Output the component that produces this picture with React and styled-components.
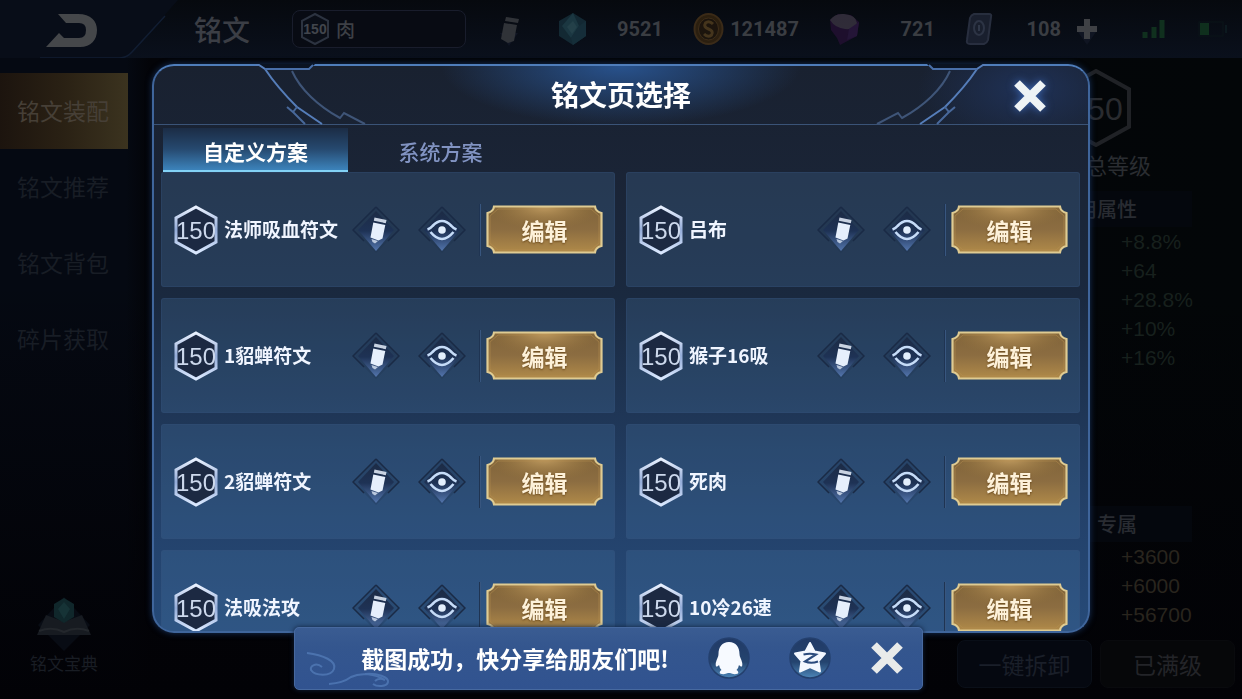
import React from "react";
import styled, { createGlobalStyle } from "styled-components";

const GlobalStyle = createGlobalStyle`
    * {
        box-sizing: border-box;
    }

    body {
        margin: 0;
        background: #030509;
        font-family: "Noto Sans CJK SC", "Noto Sans", sans-serif;
        overflow: hidden;
    }

    button {
        margin: 0;
        padding: 0;
        border: 0;
        background: none;
        font-family: inherit;
        cursor: pointer;
    }

    h1, h2, h3, ul {
        margin: 0;
        padding: 0;
        list-style: none;
    }

    svg {
        display: block;
        flex: none;
    }
`

/* ---------- page behind the dialog ---------- */

const Page = styled.div`
    display: flex;
    flex-direction: column;
    height: 100vh;
    background:
        linear-gradient(transparent 40%, #020206),
        linear-gradient(90deg, #050912 0, #050912 126px, #030408 150px, #030608 100%);
`

const TopBar = styled.header`
    display: flex;
    align-items: center;
    height: 58px;
    padding-right: 14px;
    background: linear-gradient(#06090e, #0a101c);
    color: #3a3d42;
`

const BackButton = styled.button`
    width: 194px;
    height: 58px;
`

const PageTitle = styled.h1`
    width: 98px;
    font-size: 28px;
    line-height: 40px;
    font-weight: 500;
    color: #3b3e45;
`

const PageSelect = styled.button`
    display: flex;
    align-items: center;
    gap: 6px;
    width: 174px;
    height: 38px;
    padding-left: 7px;
    border: 1px solid #191d2c;
    border-radius: 8px;
    background: #080b13;
    color: #3d4046;
    font-size: 19px;
    line-height: 28px;
    font-weight: 500;
`

const RenameButton = styled.button`
    margin: 0 auto 0 30px;
`

const Resources = styled.ul`
    display: flex;
    gap: 30px;
`

const Resource = styled.li`
    display: flex;
    align-items: center;
    justify-content: space-between;
    width: ${({ $narrow }) => ($narrow ? "96px" : "106px")};
    font-family: Roboto, "Liberation Sans", sans-serif;
    font-weight: 700;
    font-size: 20px;
    line-height: 30px;

    svg {
        opacity: 0.8;
    }
`

const AddButton = styled.button`
    margin: 0 44px 0 15px;
`

const DeviceStatus = styled.div`
    display: flex;
    align-items: center;
    gap: 32px;
`

const Body = styled.div`
    display: flex;
    flex: 1;
    justify-content: space-between;
    min-height: 0;
`

const Sidebar = styled.nav`
    display: flex;
    flex-direction: column;
    width: 128px;
    padding-top: 15px;
`

const SideItem = styled.a`
    height: 76px;
    padding-left: 17px;
    font-size: 23px;
    line-height: 74px;
    text-decoration: none;
    color: ${({ $active }) => ($active ? "#463f36" : "#181d25")};
    background: ${({ $active }) =>
        $active ? "linear-gradient(90deg, #1c140e, #2a2114 50%, #3b331f)" : "none"};
`

const Guide = styled.button`
    display: flex;
    flex-direction: column;
    align-items: center;
    margin-top: auto;
    padding-bottom: 24px;
    color: #191d24;
    font-size: 17px;
    line-height: 24px;
`

const Summary = styled.aside`
    display: flex;
    flex-direction: column;
    align-items: center;
    width: 285px;
    padding: 11px 7px 11px 0;
    color: #25282c;
`

const TotalLabel = styled.p`
    margin: 1px 0 11px;
    font-size: 22px;
    line-height: 32px;
    color: #2a2d31;
`

const AttrTitle = styled.h3`
    width: 192px;
    height: 36px;
    padding-right: 55px;
    background: #04070d;
    color: #292c32;
    font-size: 20px;
    line-height: 36px;
    font-weight: 500;
    text-align: right;
`

const AttrList = styled.ul`
    width: 192px;
    padding-left: 121px;
    font-family: "Liberation Sans", sans-serif;
    font-size: 21px;
    line-height: 29px;
    color: ${({ $gold }) => ($gold ? "#29251e" : "#17201d")};
`

const Exclusive = styled.section`
    margin-top: auto;
`

const SummaryActions = styled.div`
    display: flex;
    gap: 8px;
    width: 100%;
    margin-top: 11px;
`

const SummaryButton = styled.button`
    flex: 1;
    height: 48px;
    border: 1px solid ${({ $done }) => ($done ? "#090a0d" : "#0a0f18")};
    border-radius: 8px;
    background: ${({ $done }) => ($done ? "#060709" : "#050810")};
    color: ${({ $done }) => ($done ? "#232428" : "#1a1f29")};
    font-size: 23px;
    line-height: 32px;
`

/* ---------- dialog ---------- */

const DialogLayer = styled.div`
    position: fixed;
    inset: 0;
    display: flex;
    padding: 64px 152px 66px;
`

const Dialog = styled.section`
    position: relative;
    display: flex;
    flex-direction: column;
    flex: 1;
    min-width: 0;
    border: 2px solid #3f659b;
    border-top-color: #4f7dba;
    border-radius: 22px;
    background: linear-gradient(#192130 0, #1a2436 110px, #1a293f 230px, #23416a 450px, #264a78 100%);
    box-shadow: 0 0 6px #16305a;
`

const DialogHeader = styled.div`
    display: flex;
    align-items: center;
    justify-content: center;
    flex: none;
    height: 59px;
    padding-bottom: 2px;
    border-bottom: 1px solid #3a5377;
    border-radius: 20px 20px 0 0;
    background:
        radial-gradient(ellipse 180px 60px at 50% 0, #28528d, transparent),
        radial-gradient(ellipse 110px 60px at calc(100% - 60px) 40%, #1f3156, transparent);
`

const HeaderFrame = styled.svg`
    position: absolute;
    top: -2px;
    ${({ $right }) => ($right ? "right: -2px; transform: scaleX(-1);" : "left: -2px;")}
`

const DialogTitle = styled.h2`
    color: #fff;
    font-size: 28px;
    line-height: 40px;
    font-weight: 700;
`

const DialogClose = styled.button`
    position: absolute;
    top: 13px;
    right: 41px;
    filter: drop-shadow(0 0 4px #3d68b5);
`

const Tabs = styled.div`
    display: flex;
    flex: none;
    height: 47px;
    padding: 3px 9px 0;
`

const Tab = styled.button`
    width: 185px;
    padding-top: 3px;
    border-bottom: 2px solid ${({ $active }) => ($active ? "#83d2f6" : "transparent")};
    background: ${({ $active }) =>
        $active ? "linear-gradient(#1b2c45, #26496f 50%, #3c83bb)" : "none"};
    color: ${({ $active }) => ($active ? "#fff" : "#8193c2")};
    font-size: 21px;
    line-height: 30px;
    font-weight: ${({ $active }) => ($active ? 700 : 500)};
`

const CardGrid = styled.ul`
    display: grid;
    grid-template-columns: 1fr 1fr;
    grid-auto-rows: 115px;
    gap: 11px;
    flex: 1;
    min-height: 0;
    padding: 0 8px 0 7px;
    overflow: hidden;
    border-radius: 0 0 20px 20px;
`

const Card = styled.li`
    display: flex;
    align-items: center;
    min-width: 0;
    padding: 0 11px 0 12px;
    border: 1px solid #36527a55;
    border-radius: 3px;
    background: #4a76a842;
`

const CardName = styled.span`
    flex: 1;
    min-width: 0;
    padding: 0 0 2px 6px;
    color: #f0f5ff;
    font-size: 19px;
    line-height: 28px;
    font-weight: 700;
    white-space: nowrap;
`

const CardTools = styled.div`
    display: flex;
    gap: 18px;
    padding-right: 13px;
`

const EditButton = styled.button`
    position: relative;
    width: 117px;
    height: 49px;
    color: #fdf1d9;
    font-size: 23px;
    line-height: 48px;
    font-weight: 700;
    text-shadow: 0 1px 2px #6b4a1c;

    svg {
        position: absolute;
        inset: 0;
    }

    span {
        position: relative;
    }
`

const Divider = styled.span`
    width: 2px;
    height: 52px;
    margin-right: 5px;
    border-left: 1px solid #1f3452;
    border-right: 1px solid #38567f;
`

/* ---------- toast ---------- */

const ToastLayer = styled.div`
    position: fixed;
    inset: auto 0 9px;
    display: flex;
    justify-content: center;
    padding-right: 25px;
`

const Toast = styled.div`
    position: relative;
    display: flex;
    align-items: center;
    gap: 39px;
    height: 63px;
    padding: 0 18px 2px 66px;
    border: 1px solid #47699f;
    border-radius: 5px;
    background: linear-gradient(#3a5c92, #34568e 30%, #315390);
    box-shadow: 0 0 5px #10203c;
    color: #fff;
    font-size: 23px;
    line-height: 34px;
    font-weight: 700;
`

const Swirl = styled.svg`
    position: absolute;
    left: 6px;
    bottom: 0;
`

const Hexagon = ({ width, height, size, stroke, color, fill, line = 3, bold }) => (
    <svg width={width} height={height} viewBox={`0 0 ${width} ${height}`}>
        <path
            d={`M${width / 2} 2L${width - 2} ${height * 0.26}V${height * 0.74}L${width / 2} ${height - 2}L2 ${height * 0.74}V${height * 0.26}Z`}
            fill={fill}
            stroke={stroke}
            strokeWidth={line}
        />
        <text
            x={width / 2}
            y={height / 2 + size * 0.36}
            textAnchor="middle"
            fontFamily="Liberation Sans"
            fontSize={size}
            fontWeight={bold ? 700 : 400}
            fill={color}
        >
            150
        </text>
    </svg>
)

const Diamond = ({ children }) => (
    <svg width="48" height="48" viewBox="0 0 48 48">
        <path d="M24 1L47 24L24 47L1 24Z" fill="#1d2f4c" fillOpacity=".25" />
        <path d="M24 5L42 24L24 45L6 24Z" fill="url(#diamond)" />
        <path d="M24 1L47 24L36 35M24 1L1 24L12 35" fill="none" stroke="#1a2a45" strokeWidth="1.5" />
        {children}
    </svg>
)

const PencilIcon = () => (
    <Diamond>
        <g fill="#e6effc">
            <path d="M22.5 11.5L34.5 14L33.8 17.2L21.8 14.7Z" opacity=".85" />
            <path d="M21.300 16.500L33.300 19L30.500 32.500L26.500 34.500L18.500 31.500Z" />
            <path d="M19.500 33L26 35L23 37.500L20.500 36Z" opacity=".75" />
        </g>
    </Diamond>
)

const EyeIcon = () => (
    <Diamond>
        <g fill="none" stroke="#c6dcf8" strokeWidth="2.6">
            <path d="M9.5 23.5Q12.5 22.5 14.5 20Q24 10 33.5 20Q35.5 22.5 38.5 23.5" />
            <path d="M12.500 26Q24 40 35.500 26" />
        </g>
        <circle cx="24" cy="24" r="3.8" fill="#e3effd" />
    </Diamond>
)

const CloseIcon = ({ color }) => (
    <svg width="34" height="34" viewBox="0 0 34 34">
        <path d="M4 4L30 30M30 4L4 30" stroke={color} strokeWidth="8" />
    </svg>
)

const FrameLines = ({ right }) => (
    <HeaderFrame $right={right} width="220" height="62" viewBox="0 0 220 62" fill="none" aria-hidden="true">
        <path d="M106 0H163L158 5H113Z" fill="#0a1322" />
        <path d="M104 1H107L113 5Q125 23 145 43L170 60" stroke="#557db9" strokeWidth="2" />
        <path d="M113 5H157L161 1" stroke="#496fa9" strokeWidth="2" />
        <path d="M140 7C148 25 166 42 188 54L192 49L213 60" stroke="#3f5578" strokeWidth="2" />
        <path d="M145 43L141 48L135 43M141 48L153 60" stroke="#48689a" strokeWidth="2" />
    </HeaderFrame>
)

const SharedGradients = () => (
    <svg width="0" height="0" style={{ position: "absolute" }} aria-hidden="true">
        <defs>
            <linearGradient id="diamond" x1="0" y1="0" x2="0" y2="1">
                <stop offset="0" stopColor="#1c2b45" />
                <stop offset=".5" stopColor="#1e3255" />
                <stop offset="1" stopColor="#5375ac" />
            </linearGradient>
            <linearGradient id="gold" x1="0" y1="0" x2="0" y2="1">
                <stop offset="0" stopColor="#80643a" />
                <stop offset=".5" stopColor="#8c6d41" />
                <stop offset="1" stopColor="#b08a49" />
            </linearGradient>
            <radialGradient id="goldGlow" cx=".5" cy="0" r=".5">
                <stop offset="0" stopColor="#c29d62" />
                <stop offset="1" stopColor="#9b783f" stopOpacity="0" />
            </radialGradient>
            <linearGradient id="hex" x1="0" y1="0" x2="0" y2="1">
                <stop offset="0" stopColor="#e9f1ff" />
                <stop offset=".5" stopColor="#93abd8" />
                <stop offset="1" stopColor="#dbe9ff" />
            </linearGradient>
            <linearGradient id="round" x1="0" y1="0" x2="0" y2="1">
                <stop offset="0" stopColor="#213a66" />
                <stop offset=".6" stopColor="#24446f" />
                <stop offset="1" stopColor="#4d86b8" />
            </linearGradient>
        </defs>
    </svg>
)

const goldEdge = "M8 1.5H109Q109.500 6.500 115.500 8V41Q109.500 42.500 109 47.500H8Q7.500 42.500 1.500 41V8Q7.500 6.500 8 1.500Z"

const GoldButton = ({ children }) => (
    <EditButton type="button">
        <svg width="117" height="49" viewBox="0 0 117 49">
            <path d={goldEdge} fill="url(#gold)" />
            <path d={goldEdge} fill="url(#goldGlow)" stroke="#dfcb92" strokeWidth="2.200" />
            <path d="M12 4H105L113 11V38L105 45H12L4 38V11Z" fill="none" stroke="#b8904f" opacity=".5" />
        </svg>
        <span>{children}</span>
    </EditButton>
)

const QQIcon = () => (
    <svg width="42" height="42" viewBox="0 0 42 42">
        <circle cx="21" cy="21" r="20" fill="url(#round)" stroke="#24406e" strokeWidth="1.5" />
        <path
            d="M21 5C14 5 10.500 10 10.500 17Q10.500 19 9.500 21Q7 26 8 29.500Q9.500 30 11 28Q11.500 31 13.500 33Q11 34.500 12 36.500Q16 38 20 36H22Q26 38 30 36.500Q31 34.500 28.500 33Q30.500 31 31 28Q32.500 30 34 29.500Q35 26 32.500 21Q31.500 19 31.500 17C31.500 10 28 5 21 5Z"
            fill="#f7faff"
        />
    </svg>
)

const QzoneIcon = () => (
    <svg width="42" height="42" viewBox="0 0 42 42">
        <circle cx="21" cy="21" r="20" fill="url(#round)" stroke="#24406e" strokeWidth="1.5" />
        <path
            d="M21 6L25.500 14.500L36 16.500L29.500 24L31 34.500L21 30L11 34.500L12.500 24L6 16.500L16.500 14.500Z"
            fill="#f3f8ff"
            stroke="#f3f8ff"
            strokeWidth="2"
            strokeLinejoin="round"
        />
        <path d="M14.500 17.500Q21 16 27 17.500L16 24.500Q22 27 29 24.500" fill="none" stroke="#2a4b7d" strokeWidth="2.200" />
    </svg>
)

const BackIcon = () => (
    <svg width="194" height="58" viewBox="0 0 194 58">
        <path d="M0 0H178L132 52Q127 58 119 58H0Z" fill="#080d18" />
        <path d="M165 16L132 52Q127 58 119 58H40" fill="none" stroke="#111d32" strokeWidth="1.5" />
        <path d="M58 14H78C91 14 97 21 97 30C97 40 91 47 80 47H46L59 33L64 38H79Q86 38 86 30Q86 23 79 23H66Z" fill="#45474a" />
    </svg>
)

const CrystalIcon = () => (
    <svg width="31" height="34" viewBox="0 0 31 34">
        <path d="M16 1L29 9V24L16 33L2 24V9Z" fill="#16303b" />
        <path d="M16 1L22 14L14 26L5 14Z" fill="#20424d" />
        <path d="M22 14L29 9V24L16 33L14 26Z" fill="#193642" />
        <path d="M16 9L20 15L15 22L10 15Z" fill="#2b4e57" />
    </svg>
)

const CoinIcon = () => (
    <svg width="31" height="34" viewBox="0 0 31 34">
        <ellipse cx="15.500" cy="17" rx="14" ry="15" fill="#34240f" stroke="#483319" strokeWidth="2" />
        <ellipse cx="15.500" cy="17" rx="10" ry="11" fill="#21170c" stroke="#4b361b" />
        <path d="M20 12Q16 8 12.500 11Q10 15 15.500 17Q21 19 18.500 23Q15 26 11 22" fill="none" stroke="#55401f" strokeWidth="3" />
    </svg>
)

const GemIcon = () => (
    <svg width="31" height="34" viewBox="0 0 31 34">
        <path d="M1 8L9 2L22 3L30 10L28 24L11 33L8 26L2 18Z" fill="#241033" />
        <path d="M1 8Q6 1 15 2Q27 3 28 11Q26 18 16 17Q6 16 1 8Z" fill="#3a3442" />
        <path d="M20 17L30 10L28 24L18 28Z" fill="#2b1740" />
    </svg>
)

const CardIcon = () => (
    <svg width="28" height="34" viewBox="0 0 28 34">
        <path d="M9 2H24Q27 2 26 5L23 28Q22 31 19 32H5Q1 32 2 28L5 6Q6 3 9 2Z" fill="#1e2434" stroke="#303749" strokeWidth="2" />
        <ellipse cx="14" cy="16" rx="5" ry="7" fill="none" stroke="#363e51" strokeWidth="2" />
        <path d="M14 13V19" stroke="#3a4356" strokeWidth="2" />
    </svg>
)

const BookIcon = () => (
    <svg width="60" height="56" viewBox="0 0 60 56">
        <path d="M30 2L56 30L30 56L4 30Z" fill="#080c14" />
        <path d="M12 20L3 40H57L48 20L32 26H28Z" fill="#171b21" />
        <path d="M5 36Q18 31 30 37Q42 31 55 36" fill="none" stroke="#23272c" strokeWidth="2" />
        <path d="M30 3L40 9V22L30 28L20 22V9Z" fill="#10272b" />
        <path d="M30 7L36 14L30 24L24 14Z" fill="#163336" />
    </svg>
)

const sideItems = ["铭文装配", "铭文推荐", "铭文背包", "碎片获取"]

const resources = [
    { icon: <CrystalIcon />, value: "9521" },
    { icon: <CoinIcon />, value: "121487" },
    { icon: <GemIcon />, value: "721" },
    { icon: <CardIcon />, value: "108", narrow: true },
]

const pages = ["法师吸血符文", "吕布", "1貂蝉符文", "猴子16吸", "2貂蝉符文", "死肉", "法吸法攻", "10冷26速"]

const RunePage = ({ name }) => (
    <Card>
        <Hexagon width={44} height={50} size={24} stroke="url(#hex)" color="#ccd8ec" fill="#1c2942" />
        <CardName>{name}</CardName>
        <CardTools>
            <button type="button" aria-label="重命名">
                <PencilIcon />
            </button>
            <button type="button" aria-label="预览">
                <EyeIcon />
            </button>
        </CardTools>
        <Divider />
        <GoldButton>编辑</GoldButton>
    </Card>
)

const App = () => (
    <>
        <GlobalStyle />
        <SharedGradients />
        <Page>
            <TopBar>
                <BackButton type="button" aria-label="返回">
                    <BackIcon />
                </BackButton>
                <PageTitle>铭文</PageTitle>
                <PageSelect type="button">
                    <Hexagon width={30} height={34} size={14} stroke="#2c3340" color="#41454c" fill="#0a0e17" line={2} bold />
                    肉
                </PageSelect>
                <RenameButton type="button" aria-label="重命名">
                    <svg width="28" height="36" viewBox="0 0 28 36">
                        <path d="M4 22L13 35L22 22Z" fill="#111624" />
                        <path d="M10 6L23 8L22 12L9 10ZM8 12L21 14L18 30L12 32L5 28Z" fill="#303338" />
                    </svg>
                </RenameButton>
                <Resources>
                    {resources.map(({ icon, value, narrow }) => (
                        <Resource key={value} $narrow={narrow}>
                            {icon}
                            <span>{value}</span>
                        </Resource>
                    ))}
                </Resources>
                <AddButton type="button" aria-label="添加">
                    <svg width="22" height="36" viewBox="0 0 22 36">
                        <path d="M2 21L11 34L20 21Z" fill="#101522" />
                        <path d="M11 8V28M1 18H21" stroke="#3f4145" strokeWidth="6" />
                    </svg>
                </AddButton>
                <DeviceStatus>
                    <svg width="24" height="18" viewBox="0 0 24 18">
                        <path d="M3 18V12M12 18V7M20 18V0" stroke="#10301e" strokeWidth="5" />
                    </svg>
                    <svg width="30" height="18" viewBox="0 0 30 18">
                        <rect x="1" y="2" width="24" height="14" fill="none" stroke="#0a1519" />
                        <rect x="2" y="3" width="9" height="12" fill="#0f2f1d" />
                        <path d="M28 5V13" stroke="#0c191f" strokeWidth="2" />
                    </svg>
                </DeviceStatus>
            </TopBar>
            <Body>
                <Sidebar>
                    {sideItems.map((item, i) => (
                        <SideItem key={item} href="#" $active={i === 0}>
                            {item}
                        </SideItem>
                    ))}
                    <Guide type="button">
                        <BookIcon />
                        铭文宝典
                    </Guide>
                </Sidebar>
                <Summary>
                    <Hexagon width={70} height={78} size={32} stroke="#202226" color="#292b2f" fill="none" line={4} />
                    <TotalLabel>铭文总等级</TotalLabel>
                    <AttrTitle>通用属性</AttrTitle>
                    <AttrList>
                        <li>+8.8%</li>
                        <li>+64</li>
                        <li>+28.8%</li>
                        <li>+10%</li>
                        <li>+16%</li>
                    </AttrList>
                    <Exclusive>
                        <AttrTitle>专属</AttrTitle>
                        <AttrList $gold>
                            <li>+3600</li>
                            <li>+6000</li>
                            <li>+56700</li>
                        </AttrList>
                    </Exclusive>
                    <SummaryActions>
                        <SummaryButton type="button">一键拆卸</SummaryButton>
                        <SummaryButton type="button" $done>
                            已满级
                        </SummaryButton>
                    </SummaryActions>
                </Summary>
            </Body>
        </Page>

        <DialogLayer>
            <Dialog role="dialog" aria-labelledby="dialog-title">
                <DialogHeader>
                    <DialogTitle id="dialog-title">铭文页选择</DialogTitle>
                </DialogHeader>
                <FrameLines />
                <FrameLines right />
                <DialogClose type="button" aria-label="关闭">
                    <CloseIcon color="#eef3f5" />
                </DialogClose>
                <Tabs role="tablist">
                    <Tab type="button" role="tab" aria-selected="true" $active>
                        自定义方案
                    </Tab>
                    <Tab type="button" role="tab" aria-selected="false">
                        系统方案
                    </Tab>
                </Tabs>
                <CardGrid>
                    {pages.map(name => (
                        <RunePage key={name} name={name} />
                    ))}
                </CardGrid>
            </Dialog>
        </DialogLayer>

        <ToastLayer>
            <Toast role="status">
                <Swirl width="92" height="42" viewBox="0 0 92 42" fill="none" stroke="#5c87c4" strokeWidth="2" opacity=".6">
                    <path d="M6 6C22 8 36 14 33 22C30 30 14 29 10 23C9 19 15 15 21 20" />
                    <path d="M28 37Q42 36 50 30C60 25 74 27 84 33Q78 30 74 34" />
                    <path d="M64 27C76 26 88 30 87 35C86 40 76 40 72 37" />
                </Swirl>
                <span>截图成功，快分享给朋友们吧!</span>
                <button type="button" aria-label="分享到QQ">
                    <QQIcon />
                </button>
                <button type="button" aria-label="分享到QQ空间">
                    <QzoneIcon />
                </button>
                <button type="button" aria-label="关闭">
                    <CloseIcon color="#e9ebea" />
                </button>
            </Toast>
        </ToastLayer>
    </>
)

export default App;
